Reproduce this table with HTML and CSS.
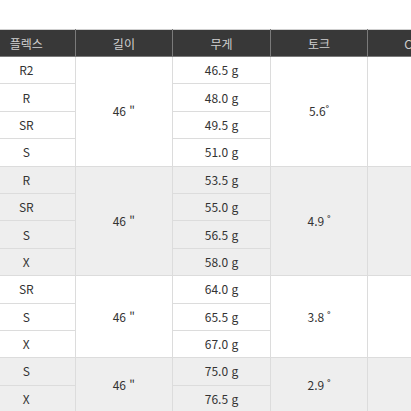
FILE: index.html
```html
<!DOCTYPE html>
<html lang="ko">
<head>
<meta charset="utf-8">
<link rel="stylesheet" href="styles.css">
</head>
<body>
<div class="wrap">
<table class="spec">
<colgroup>
<col class="c"><col class="c"><col class="c"><col class="c"><col class="c">
</colgroup>
<thead>
<tr><th>플렉스</th><th>길이</th><th>무게</th><th>토크</th><th>CPM</th></tr>
</thead>
<tbody class="g-white">
<tr><td>R2</td><td rowspan="4">46 "</td><td>46.5 g</td><td rowspan="4">5.6˚</td><td rowspan="4"></td></tr>
<tr><td>R</td><td>48.0 g</td></tr>
<tr><td>SR</td><td>49.5 g</td></tr>
<tr><td>S</td><td>51.0 g</td></tr>
</tbody>
<tbody class="g-gray">
<tr><td>R</td><td rowspan="4">46 "</td><td>53.5 g</td><td rowspan="4">4.9 ˚</td><td rowspan="4"></td></tr>
<tr><td>SR</td><td>55.0 g</td></tr>
<tr><td>S</td><td>56.5 g</td></tr>
<tr><td>X</td><td>58.0 g</td></tr>
</tbody>
<tbody class="g-white">
<tr><td>SR</td><td rowspan="3">46 "</td><td>64.0 g</td><td rowspan="3">3.8 ˚</td><td rowspan="3"></td></tr>
<tr><td>S</td><td>65.5 g</td></tr>
<tr><td>X</td><td>67.0 g</td></tr>
</tbody>
<tbody class="g-gray">
<tr><td>S</td><td rowspan="2">46 "</td><td>75.0 g</td><td rowspan="2">2.9 ˚</td><td rowspan="2"></td></tr>
<tr><td>X</td><td>76.5 g</td></tr>
</tbody>
</table>
</div>
</body>
</html>
```

FILE: styles.css
```css
html, body {
  margin: 0;
  padding: 0;
  background: #fff;
  overflow: hidden;
}
.wrap {
  padding-top: 29px;
  width: 411px;
  overflow: hidden;
}
.spec {
  margin-left: -23px;
  border-collapse: collapse;
  table-layout: fixed;
  width: 488px;
  font-family: "Noto Sans CJK KR", "Noto Sans", sans-serif;
  font-size: 12px;
  color: #333;
}
.spec .c {
  width: 97.6px;
}
.spec th {
  background: #383838;
  color: #d0d0d0;
  font-weight: normal;
  height: 26px;
  padding: 0;
  border: 1px solid #7a7a7a;
  border-top-color: #cfcfcf;
  text-align: center;
  vertical-align: middle;
}
.spec td {
  height: 26.4px;
  padding: 0;
  border: 1px solid #dcdcdc;
  text-align: center;
  vertical-align: middle;
  line-height: 16px;
}
.g-gray td {
  background: #eeeeee;
}
```
